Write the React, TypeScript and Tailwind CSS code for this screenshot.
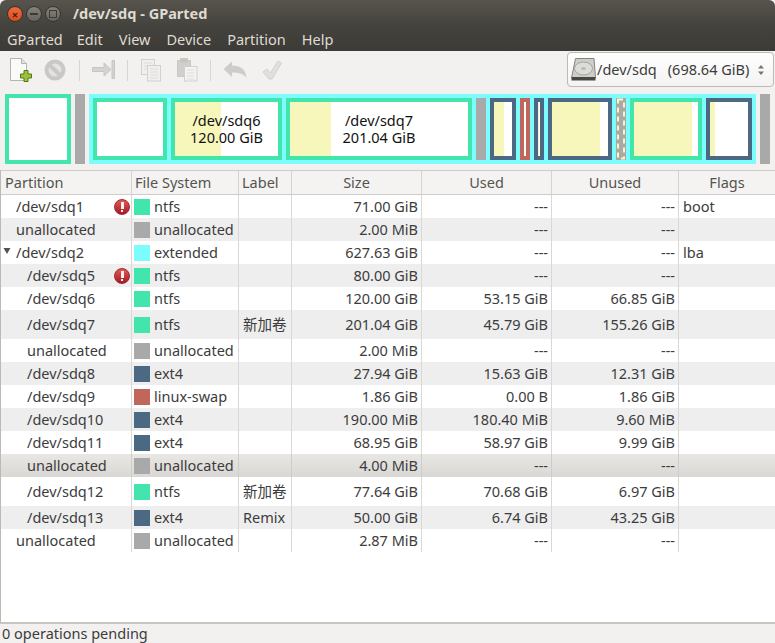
const columns = [
  { title: 'Partition', width: 'w-[131px]', align: 'text-left pl-1' },
  { title: 'File System', width: 'w-[107px]', align: 'text-left pl-[3px]' },
  { title: 'Label', width: 'w-[53px]', align: 'text-left pl-[3px]' },
  { title: 'Size', width: 'w-[130px]', align: 'text-center' },
  { title: 'Used', width: 'w-[130px]', align: 'text-center' },
  { title: 'Unused', width: 'w-[127px]', align: 'text-center' },
  { title: 'Flags', width: 'flex-1', align: 'text-center' },
];

const fsColors: Record<string, string> = {
  ntfs: 'bg-[#42e5ac]',
  unallocated: 'bg-[#a9a9a9]',
  extended: 'bg-[#7dfcfe]',
  ext4: 'bg-[#4b6983]',
  'linux-swap': 'bg-[#c1665a]',
};

type Row = {
  name: string;
  indent: 'pl-[15px]' | 'pl-[26px]';
  fs: string;
  label?: string;
  size: string;
  used: string;
  unused: string;
  flags?: string;
  warn?: boolean;
  expander?: boolean;
  tall?: boolean;
  selected?: boolean;
};

const rows: Row[] = [
  { name: '/dev/sdq1', indent: 'pl-[15px]', fs: 'ntfs', size: '71.00 GiB', used: '---', unused: '---', flags: 'boot', warn: true },
  { name: 'unallocated', indent: 'pl-[15px]', fs: 'unallocated', size: '2.00 MiB', used: '---', unused: '---' },
  { name: '/dev/sdq2', indent: 'pl-[15px]', fs: 'extended', size: '627.63 GiB', used: '---', unused: '---', flags: 'lba', expander: true },
  { name: '/dev/sdq5', indent: 'pl-[26px]', fs: 'ntfs', size: '80.00 GiB', used: '---', unused: '---', warn: true },
  { name: '/dev/sdq6', indent: 'pl-[26px]', fs: 'ntfs', size: '120.00 GiB', used: '53.15 GiB', unused: '66.85 GiB' },
  { name: '/dev/sdq7', indent: 'pl-[26px]', fs: 'ntfs', label: '新加卷', size: '201.04 GiB', used: '45.79 GiB', unused: '155.26 GiB', tall: true },
  { name: 'unallocated', indent: 'pl-[26px]', fs: 'unallocated', size: '2.00 MiB', used: '---', unused: '---' },
  { name: '/dev/sdq8', indent: 'pl-[26px]', fs: 'ext4', size: '27.94 GiB', used: '15.63 GiB', unused: '12.31 GiB' },
  { name: '/dev/sdq9', indent: 'pl-[26px]', fs: 'linux-swap', size: '1.86 GiB', used: '0.00 B', unused: '1.86 GiB' },
  { name: '/dev/sdq10', indent: 'pl-[26px]', fs: 'ext4', size: '190.00 MiB', used: '180.40 MiB', unused: '9.60 MiB' },
  { name: '/dev/sdq11', indent: 'pl-[26px]', fs: 'ext4', size: '68.95 GiB', used: '58.97 GiB', unused: '9.99 GiB' },
  { name: 'unallocated', indent: 'pl-[26px]', fs: 'unallocated', size: '4.00 MiB', used: '---', unused: '---', selected: true },
  { name: '/dev/sdq12', indent: 'pl-[26px]', fs: 'ntfs', label: '新加卷', size: '77.64 GiB', used: '70.68 GiB', unused: '6.97 GiB', tall: true },
  { name: '/dev/sdq13', indent: 'pl-[26px]', fs: 'ext4', label: 'Remix', size: '50.00 GiB', used: '6.74 GiB', unused: '43.25 GiB' },
  { name: 'unallocated', indent: 'pl-[15px]', fs: 'unallocated', size: '2.87 MiB', used: '---', unused: '---' },
];

function WindowButton({ color, children }: { color: string; children: React.ReactNode }) {
  return (
    <div className={`w-4 h-4 rounded-full flex items-center justify-center border border-[#35342f] bg-gradient-to-b ${color}`}>
      {children}
    </div>
  );
}

function NewIcon() {
  return (
    <svg width="24" height="24" viewBox="0 0 24 24">
      <path d="M1.500 0.500h11l5 5v17h-16z" fill="#fafafa" stroke="#b4b3b0" />
      <path d="M12.500 0.500v5h5" fill="#e0e0de" stroke="#b4b3b0" />
      <path d="M15 12.500h4v3.500h3.500v4H19v3.500h-4V20h-3.500v-4H15z" fill="#a0bf3d" stroke="#4f7a14" />
    </svg>
  );
}

function DeleteIcon() {
  return (
    <svg width="24" height="24" viewBox="0 0 24 24" fill="none" stroke="#c9c8c6">
      <circle cx="12" cy="12" r="8.500" strokeWidth="4" fill="#e4e3e1" />
      <path d="M6 6.500l12 11.500" strokeWidth="4" />
    </svg>
  );
}

function ResizeIcon() {
  return (
    <svg width="24" height="24" viewBox="0 0 24 24" fill="#d4d3d1" stroke="#c6c5c3" strokeLinejoin="round">
      <path d="M1.500 9.500h11.500v-4.500l7 6.500-7 6.500v-4.500H1.500z" />
      <rect x="21" y="2.500" width="2.500" height="18" />
    </svg>
  );
}

function CopyIcon() {
  return (
    <svg width="22" height="24" viewBox="0 0 22 24" fill="#f0efee" stroke="#d2d1cf">
      <rect x="0.500" y="1.500" width="13" height="15" />
      <path d="M3 5h8M3 8h8M3 11h3" stroke="#dddcda" />
      <rect x="6.500" y="7.500" width="13" height="15.500" />
      <path d="M9 11h8M9 14h8M9 17h8M9 20h8" stroke="#dddcda" />
    </svg>
  );
}

function PasteIcon() {
  return (
    <svg width="22" height="24" viewBox="0 0 22 24" stroke="#c9c8c5">
      <rect x="0.500" y="2.500" width="13" height="16" fill="#d0cfcc" />
      <rect x="3.500" y="0.500" width="7" height="4" fill="#c6c5c2" />
      <rect x="7.500" y="8.500" width="12.500" height="14.500" fill="#f4f3f2" stroke="#d2d1cf" />
      <path d="M10 12h7.500M10 15h7.500M10 18h7.500M10 21h7.500" fill="none" stroke="#dddcda" />
    </svg>
  );
}

function UndoIcon() {
  return (
    <svg width="24" height="24" viewBox="0 0 24 24" fill="#cdccca">
      <path d="M0.500 11L9 3.500V7.500C17 7.500 23 11 23.500 20C21 16 16 14.500 9 14.500V19z" />
    </svg>
  );
}

function ApplyIcon() {
  return (
    <svg width="20" height="24" viewBox="0 0 20 24" fill="#e0dfdd" stroke="#d2d1cf">
      <path d="M1 14l4-3 3.500 4L16 3l3.500 2L10 21H7z" />
    </svg>
  );
}

function ToolSep() {
  return <div className="w-px h-[21px] bg-[#d8d6d4]" />;
}

function DiskIcon() {
  return (
    <svg width="25" height="25" viewBox="0 0 25 25">
      <path d="M4.500 1.500h18.500l1.500 19.500H0.500z" fill="#cdcdc9" stroke="#85857f" />
      <ellipse cx="12.500" cy="11.500" rx="9" ry="6.500" fill="#dcdcd9" stroke="#a3a39f" />
      <ellipse cx="12.500" cy="11.500" rx="2.500" ry="1.500" fill="#b9b9b5" />
      <path d="M0.500 20h24v3.500H0.500z" fill="#484846" />
    </svg>
  );
}

function WarnIcon() {
  return (
    <div className="w-4 h-4 rounded-full bg-gradient-to-b from-[#e2574f] to-[#a3192a] border border-[#9a2a30] flex flex-col items-center justify-center gap-[1px]">
      <div className="w-[3px] h-[7px] bg-[#fbeeee]" />
      <div className="w-[2px] h-[2px] bg-[#fbeeee]" />
    </div>
  );
}

function Swatch({ fs }: { fs: string }) {
  return <div className={`w-4 h-4 shrink-0 ${fsColors[fs]}`} />;
}

// one box of the disk map: border colour, yellow used part, optional caption
function PartBox({ width, border, used, label }: { width: string; border: string; used?: string; label?: string[] }) {
  return (
    <div className={`relative h-full border-4 bg-white shrink-0 flex ${width} ${border}`}>
      {used && <div className={`h-full bg-[#f7f7bc] ${used}`} />}
      {label && (
        <div className="absolute inset-0 flex items-center justify-center text-center text-[#111] leading-[17px]">
          <p>
            {label[0]}
            <br />
            {label[1]}
          </p>
        </div>
      )}
    </div>
  );
}

function DashedBox() {
  return (
    <div className="h-full w-[10px] bg-[#a9a9a9] shrink-0">
      <svg width="10" height="62" viewBox="0 0 10 62" fill="none" stroke="#f7f7bc" strokeWidth="2">
        <rect x="2" y="1.500" width="6" height="59" strokeDasharray="5 4" />
      </svg>
    </div>
  );
}

function TableRow({ row, index }: { row: Row; index: number }) {
  const bg = row.selected
    ? 'bg-gradient-to-b from-[#e9e7e4] to-[#dad8d4] text-[#3c3c3c]'
    : index % 2
      ? 'bg-[#eeeeee]'
      : 'bg-white';
  const line = row.selected ? 'border-[#cfcdc9]' : 'border-[#d9d8d6]';

  return (
    <div className={`flex items-stretch ${row.tall ? 'h-[29px]' : 'h-[23px]'} ${bg}`}>
      <div className={`relative w-[131px] shrink-0 flex items-center justify-between pr-[1px] border-r ${line} ${row.indent}`}>
        {row.expander && (
          <svg className="absolute left-[2px] top-[6px]" width="8" height="8" viewBox="0 0 8 8" fill="#55534f">
            <path d="M0.500 1h7L4 7z" />
          </svg>
        )}
        <span>{row.name}</span>
        {row.warn && <WarnIcon />}
      </div>
      <div className={`w-[107px] shrink-0 flex items-center gap-1 pl-[2px] border-r ${line}`}>
        <Swatch fs={row.fs} />
        <span>{row.fs}</span>
      </div>
      <div className={`w-[53px] shrink-0 flex items-center pl-1 whitespace-nowrap border-r ${line}`}>{row.label}</div>
      <div className={`w-[130px] shrink-0 flex items-center justify-end pr-[3px] border-r ${line}`}>{row.size}</div>
      <div className={`w-[130px] shrink-0 flex items-center justify-end pr-[3px] border-r ${line}`}>{row.used}</div>
      <div className={`w-[127px] shrink-0 flex items-center justify-end pr-[3px] border-r ${line}`}>{row.unused}</div>
      <div className="flex-1 flex items-center pl-1">{row.flags}</div>
    </div>
  );
}

export default function App() {
  return (
    <div className="w-[775px] h-[643px] flex flex-col overflow-hidden bg-[#f2f1f0] text-[#3c3c3c] text-[14.500px] font-['Noto_Sans','Noto_Sans_CJK_SC',sans-serif]">
      <div className="h-[51px] shrink-0 bg-gradient-to-b from-[#57544d] via-[#45433d] to-[#3c3b37] rounded-t-[6px] text-[#dfdbd2]">
        <div className="h-[28px] flex items-center pl-[7px]">
          <div className="flex items-center gap-[3px]">
            <WindowButton color="from-[#ef6a3c] to-[#dd4a1f]">
              <span className="text-[#44200f] text-[11px] leading-none font-bold">×</span>
            </WindowButton>
            <WindowButton color="from-[#84827a] to-[#66645d]">
              <div className="w-2 h-[2px] bg-[#3c3b37]" />
            </WindowButton>
            <WindowButton color="from-[#84827a] to-[#66645d]">
              <div className="w-2 h-2 border border-[#3c3b37]" />
            </WindowButton>
          </div>
          <div className="ml-[12px] font-bold">/dev/sdq - GParted</div>
        </div>
        <div className="h-[23px] flex items-center gap-[16px] pl-[7px]">
          <span className="-mr-[2px]">GParted</span>
          <span>Edit</span>
          <span>View</span>
          <span>Device</span>
          <span>Partition</span>
          <span>Help</span>
        </div>
      </div>

      <div className="h-[38px] shrink-0 flex items-center pl-[9px] pr-[1px]">
        <NewIcon />
        <div className="ml-[10px]"><DeleteIcon /></div>
        <div className="ml-[12px]"><ToolSep /></div>
        <div className="ml-[11px]"><ResizeIcon /></div>
        <div className="ml-[12px]"><ToolSep /></div>
        <div className="ml-[13px]"><CopyIcon /></div>
        <div className="ml-[14px]"><PasteIcon /></div>
        <div className="ml-[11px]"><ToolSep /></div>
        <div className="ml-[12px]"><UndoIcon /></div>
        <div className="ml-[15px]"><ApplyIcon /></div>
        <div className="ml-auto self-start mt-[1px] w-[207px] h-[35px] flex items-center pl-[3px] pr-2 bg-gradient-to-b from-white to-[#f4f3f2] border border-[#bdb9b3] rounded-[4px]">
          <DiskIcon />
          <span className="ml-[1px]">/dev/sdq</span>
          <span className="ml-[11px]">(698.64 GiB)</span>
          <svg className="ml-auto" width="8" height="14" viewBox="0 0 8 14" fill="#77756f">
            <path d="M4 2l3 3.500H1zM4 12L1 8.500h6z" />
          </svg>
        </div>
      </div>

      <div className="h-[70px] mt-[5px] shrink-0 flex pl-[5px] pr-[5px]">
        <PartBox width="w-[66px]" border="border-[#42e5ac]" />
        <div className="w-[10px] ml-1 bg-[#a9a9a9]" />
        <div className="ml-1 w-[667px] border-4 border-[#7dfcfe] bg-[#7dfcfe] flex gap-1">
          <PartBox width="w-[74px]" border="border-[#42e5ac]" />
          <PartBox width="w-[111px]" border="border-[#42e5ac]" used="w-[46px]" label={['/dev/sdq6', '120.00 GiB']} />
          <PartBox width="w-[186px]" border="border-[#42e5ac]" used="w-[41px]" label={['/dev/sdq7', '201.04 GiB']} />
          <div className="w-[10px] bg-[#a9a9a9] shrink-0" />
          <PartBox width="w-[26px]" border="border-[#4b6983]" used="w-[10px]" />
          <PartBox width="w-[10px]" border="border-[#c1665a]" />
          <PartBox width="w-[10px]" border="border-[#4b6983]" used="w-[1px]" />
          <PartBox width="w-[64px]" border="border-[#4b6983]" used="w-[48px]" />
          <DashedBox />
          <PartBox width="w-[72px]" border="border-[#42e5ac]" used="w-[58px]" />
          <PartBox width="w-[46px]" border="border-[#4b6983]" used="w-[5px]" />
        </div>
        <div className="w-[10px] ml-1 bg-[#a9a9a9]" />
      </div>

      <div className="flex-1 mt-[6px] flex flex-col bg-white border-l border-l-[#bdbab5] border-t border-t-[#cfccc8] min-h-0">
        <div className="h-[24px] shrink-0 flex bg-[#f4f3f2] border-b border-[#cfcdc9] text-[#55534f]">
          {columns.map((col, i) => (
            <div
              key={col.title}
              className={`${col.width} ${col.align} leading-[23px] ${i < columns.length - 1 ? 'shrink-0 border-r border-[#d5d3cf]' : ''}`}
            >
              {col.title}
            </div>
          ))}
        </div>
        {rows.map((row, i) => (
          <TableRow key={i} row={row} index={i} />
        ))}
      </div>

      <div className="h-[21px] shrink-0 border-t-2 border-[#c9c6c1] pl-[2px] leading-[19px]">
        0 operations pending
      </div>
    </div>
  );
}
